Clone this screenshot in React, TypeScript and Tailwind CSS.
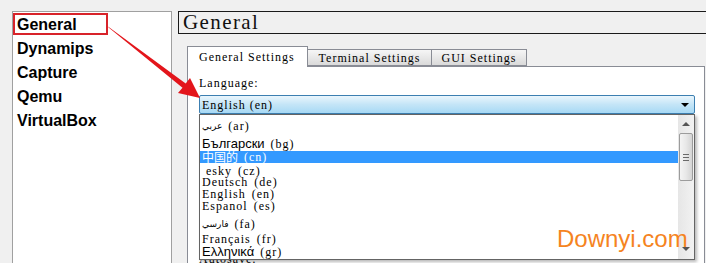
import React from "react";

const song = { fontFamily: '"Liberation Serif", "Times New Roman", serif' };

const sections = ["General", "Dynamips", "Capture", "Qemu", "VirtualBox"];

type Lang = { label: string; code: string; h: string; pt: string; kind: "serif" | "sans" | "cjk" | "arabic"; sel?: boolean };

const langs: Lang[] = [
  { label: "عربي", code: "(ar)", h: "h-[19px]", pt: "pt-[2px]", kind: "arabic" },
  { label: "Български", code: "(bg)", h: "h-[17px]", pt: "pt-[2px]", kind: "sans" },
  { label: "中国的", code: "(cn)", h: "h-[12px]", pt: "pt-0", kind: "cjk", sel: true },
  { label: " esky", code: "(cz)", h: "h-[13px]", pt: "pt-[2px]", kind: "serif" },
  { label: "Deutsch", code: "(de)", h: "h-[12px]", pt: "pt-0", kind: "serif" },
  { label: "English", code: "(en)", h: "h-[12px]", pt: "pt-0", kind: "serif" },
  { label: "Espanol", code: "(es)", h: "h-[12px]", pt: "pt-0", kind: "serif" },
  { label: "فارسي", code: "(fa)", h: "h-[20px]", pt: "pt-[3px]", kind: "arabic" },
  { label: "Français", code: "(fr)", h: "h-[13px]", pt: "pt-0", kind: "serif" },
  { label: "Ελληνικά", code: "(gr)", h: "h-[14px]", pt: "pt-0", kind: "sans" },
];

function LangName({ l }: { l: Lang }) {
  if (l.kind === "sans")
    return <span className="text-[13px] tracking-normal" style={{ fontFamily: '"Liberation Sans", Arial, sans-serif' }}>{l.label}</span>;
  if (l.kind === "cjk")
    return <span className="text-[12px] tracking-normal" style={{ fontFamily: '"Noto Sans CJK SC", sans-serif' }}>{l.label}</span>;
  if (l.kind === "arabic")
    return <span className="text-[9px] tracking-normal" style={{ fontFamily: '"DejaVu Sans", sans-serif' }}>{l.label}</span>;
  return <span className="whitespace-pre">{l.label}</span>;
}

export default function App() {
  return (
    <div className="relative w-[706px] h-[263px] overflow-hidden bg-[#f0f0f0] flex">

      {/* Left tree */}
      <div className="w-[172px] shrink-0 pl-[12px] pt-[11px]">
        <div className="h-[260px] bg-white border border-[#a0a0a0] pt-[1px] pl-[4px]">
          {sections.map((s) => (
            <div key={s} className="h-[24px] leading-[24px] text-[16px] font-bold text-black" style={{ fontFamily: '"Liberation Sans", Arial, sans-serif' }}>
              {s}
            </div>
          ))}
        </div>
      </div>

      {/* Right side */}
      <div className="ml-[6px] pt-[11px] w-[540px] shrink-0 flex flex-col">
        <div className="h-[23px] w-[540px] border border-[#1a1a1a] pl-[4px] text-[21px] leading-[21px] tracking-[1.4px] text-[#111]" style={song}>
          General
        </div>

        <div className="pl-[9px] mt-[12px]">
          {/* Tabs */}
          <div className="flex items-end h-[20px] text-[12px] tracking-[1px]" style={song}>
            <div className="relative z-10 w-[121px] h-[21px] -mb-px bg-white border border-b-0 border-[#898c95] pl-[11px] pt-[3px] leading-[14px]">
              General Settings
            </div>
            <div className="w-[124px] h-[17px] border border-l-0 border-[#898c95] bg-gradient-to-b from-[#f6f6f6] to-[#dadada] text-center leading-[16px]">
              Terminal Settings
            </div>
            <div className="w-[95px] h-[17px] border border-l-0 border-[#898c95] bg-gradient-to-b from-[#f6f6f6] to-[#dadada] text-center leading-[16px]">
              GUI Settings
            </div>
          </div>

          {/* Panel */}
          <div className="w-[518px] h-[200px] bg-white border border-[#898c95] pl-[11px] pt-[10px] text-[12px] tracking-[1px]" style={song}>
            <div className="leading-[12px]">Language:</div>

            <div className="relative mt-[6px] w-[496px]">
              <div className="h-[19px] border border-[#3c7fb1] rounded-[2px] bg-gradient-to-b from-[#eaf6fd] via-[#c4e5f7] to-[#a7d9f5] flex items-center pl-[2px] pr-[5px]">
                <span className="flex-1 leading-[12px]">English (en)</span>
                <span className="w-0 h-0 border-l-[4px] border-r-[4px] border-t-[4px] border-l-transparent border-r-transparent border-t-black" />
              </div>

              {/* Open list */}
              <div className="absolute left-0 top-full z-10 w-[496px] h-[146px] bg-white border border-[#646464] flex shadow-[2px_2px_3px_rgba(0,0,0,0.28)]">
                <div className="flex-1 flex flex-col">
                  {langs.map((l) => (
                    <div
                      key={l.code}
                      className={`${l.h} ${l.pt} flex items-center gap-[6px] pl-[2px] leading-[12px] ${l.sel ? "bg-[#3399ff] text-white" : "text-black"}`}
                    >
                      <LangName l={l} />
                      <span>{l.code}</span>
                    </div>
                  ))}
                </div>

                {/* Scrollbar */}
                <div className="w-[16px] bg-gradient-to-r from-[#e6e6e6] to-[#f2f2f2] flex flex-col items-center">
                  <div className="h-[18px] flex items-center justify-center">
                    <span className="w-0 h-0 border-l-[4px] border-r-[4px] border-b-[4px] border-l-transparent border-r-transparent border-b-[#555]" />
                  </div>
                  <div className="w-[14px] h-[48px] rounded-[2px] border border-[#9c9c9c] bg-gradient-to-r from-[#f4f4f4] via-[#e8e8e8] to-[#d4d4d4] flex flex-col items-center justify-center gap-[2px]">
                    <span className="w-[6px] h-px bg-[#6a6a6a]" />
                    <span className="w-[6px] h-px bg-[#6a6a6a]" />
                    <span className="w-[6px] h-px bg-[#6a6a6a]" />
                  </div>
                  <div className="flex-1" />
                  <div className="h-[12px] flex items-start justify-center">
                    <span className="w-0 h-0 border-l-[4px] border-r-[4px] border-t-[4px] border-l-transparent border-r-transparent border-t-[#555]" />
                  </div>
                </div>
              </div>
            </div>

            <div className="mt-[139px] leading-[12px]">Autosave:</div>
          </div>
        </div>
      </div>

      {/* Annotation: red box + arrow */}
      <div className="absolute left-[13px] top-[13px] w-[95px] h-[22px] border-2 border-[#d8232a] z-20" />
      <svg className="absolute inset-0 z-20 pointer-events-none" width="706" height="263" viewBox="0 0 706 263">
        <polygon points="108,26.5 108.6,27.6 182.5,87.8 178,93 200,98 190,78 185.7,83.4" fill="#e3151b" />
      </svg>

      {/* Watermark */}
      <div className="absolute left-[557px] top-[227px] z-30 text-[24px] leading-[24px] text-[#f5841f]" style={{ fontFamily: '"Liberation Sans", Arial, sans-serif' }}>
        Downyi.com
      </div>
    </div>
  );
}
